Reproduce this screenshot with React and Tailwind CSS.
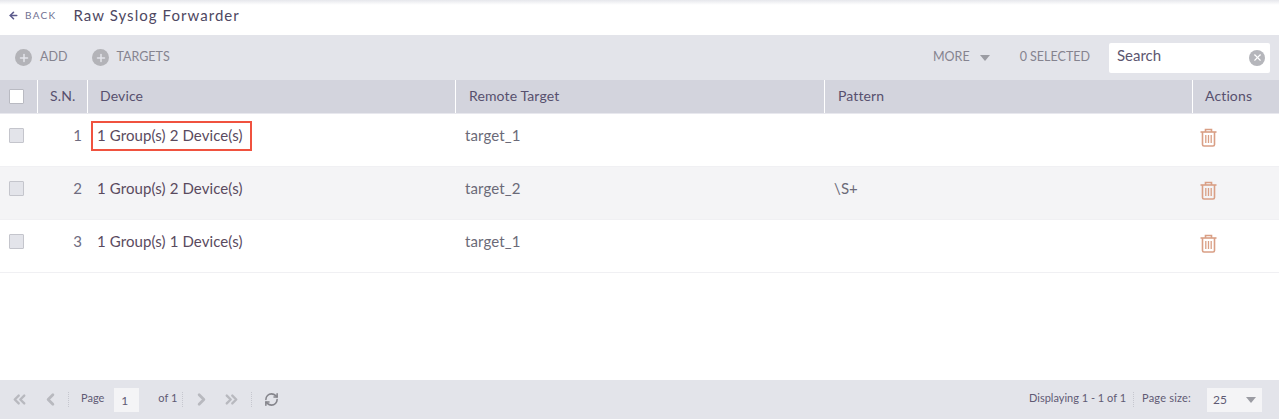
import React from "react";
import { ChevronsLeft, ChevronLeft, ChevronRight, ChevronsRight, RefreshCw, Plus, X, ArrowLeft } from "lucide-react";

const rows = [
  { id: 1, device: "1 Group(s) 2 Device(s)", target: "target_1", pattern: "", highlight: true },
  { id: 2, device: "1 Group(s) 2 Device(s)", target: "target_2", pattern: "\\S+" },
  { id: 3, device: "1 Group(s) 1 Device(s)", target: "target_1", pattern: "" },
];

const Caret = () => <span className="inline-block w-0 h-0 border-x-[5px] border-x-transparent border-t-[6px] border-t-[#9b9ca3]" />;

const PlusCircle = () => (
  <span className="w-[17px] h-[17px] rounded-full bg-[#b3b3b8] flex items-center justify-center">
    <Plus size={12} strokeWidth={3} color="#e3e4ea" />
  </span>
);

const Sep = () => <span className="block w-px h-[15px] border-l border-dotted border-[#c6c7cf]" />;

const TrashIcon = () => (
  <svg width="17" height="19" viewBox="0 0 17 19" fill="none" stroke="#d99f85" strokeWidth="1.6">
    <path d="M0.5 4h16" />
    <path d="M5.5 4V1.5h6V4" />
    <path d="M2.5 4v12.5a1.5 1.5 0 0 0 1.5 1.5h9a1.5 1.5 0 0 0 1.5-1.5V4" />
    <path d="M5.8 7v8M8.5 7v8M11.2 7v8" strokeWidth="1.3" />
  </svg>
);

export default function App() {
  return (
    <div className="w-[1279px] h-[419px] flex flex-col bg-white overflow-hidden font-['Lato',sans-serif] text-[15px] tracking-[0.1px] text-[#57506e]">
      <header className="h-[35px] shrink-0 flex items-center pl-[8px] pb-[4px] bg-gradient-to-b from-[#e6e7ec] via-white via-[14%] to-white">
        <ArrowLeft size={11} strokeWidth={3.5} color="#5b5a8c" />
        <span className="ml-[6px] text-[10px] tracking-[1.3px] text-[#6f7192]">BACK</span>
        <span className="ml-[17px] text-[15px] tracking-[1.05px] text-[#4e4862]">Raw Syslog Forwarder</span>
      </header>

      <div className="h-[45px] shrink-0 flex items-center bg-[#e3e4ea] pl-[15px] pr-[9px] text-[12.5px] tracking-normal text-[#85838f]">
        <PlusCircle />
        <span className="ml-[8px] -mt-[1px]">ADD</span>
        <span className="ml-[25px]"><PlusCircle /></span>
        <span className="ml-[7px] -mt-[1px]">TARGETS</span>
        <span className="ml-auto -mt-[1px]">MORE</span>
        <span className="ml-[10px]"><Caret /></span>
        <span className="ml-[30px] -mt-[1px]">0 SELECTED</span>
        <div className="ml-[19px] w-[161px] h-[30px] bg-white rounded-[2px] flex items-center justify-between pl-[8px] pr-[5px] text-[15px] text-[#5c5670]">
          <span className="-mt-[4px]">Search</span>
          <span className="w-[16px] h-[16px] rounded-full bg-[#b5b6bb] flex items-center justify-center">
            <X size={11} strokeWidth={2.5} color="#ffffff" />
          </span>
        </div>
      </div>

      <div className="h-[34px] shrink-0 grid grid-cols-[37px_50px_368px_369px_368px_1fr] bg-[#d3d4dd] border-b border-[#e8e8ee] text-[14px] tracking-[0.13px] text-[#57506e]">
        <div className="flex items-center pl-[9px]">
          <span className="w-[15px] h-[15px] bg-white border border-[#b9bac2] rounded-[1px]" />
        </div>
        <div className="flex items-center border-l border-white pl-[12px] pb-[2px]">S.N.</div>
        <div className="flex items-center border-l border-white pl-[12px] pb-[2px]">Device</div>
        <div className="flex items-center border-l border-white pl-[13px] pb-[2px]">Remote Target</div>
        <div className="flex items-center border-l border-white pl-[13px] pb-[2px]">Pattern</div>
        <div className="flex items-center border-l border-white pl-[12px] pb-[2px]">Actions</div>
      </div>

      <div className="flex-1">
        {rows.map((row, idx) => (
          <div
            key={row.id}
            className={`h-[53px] grid grid-cols-[37px_50px_368px_369px_368px_1fr] border-b border-[#f0f0f3] ${idx === 1 ? "bg-[#f4f4f6]" : "bg-white"}`}
          >
            <div className="pl-[9px] pt-[14px]">
              <span className="block w-[15px] h-[15px] bg-[#e3e4ea] border border-[#c4c5cc] rounded-[1px]" />
            </div>
            <div className="pt-[10px] pr-[5px] text-right text-[#6f6c80]">{row.id}</div>
            <div className="relative pl-[10px] pt-[10px] text-[#5a4a5e]">
              {row.device}
              {row.highlight && <span className="absolute left-[4px] top-[7px] w-[161px] h-[30px] border-2 border-[#f0523f]" />}
            </div>
            <div className="pl-[10px] pt-[10px] text-[#6b6a78]">{row.target}</div>
            <div className="pl-[10px] pt-[10px] text-[#6b6a78]">{row.pattern}</div>
            <div className="pl-[8px] pt-[14px]">
              <TrashIcon />
            </div>
          </div>
        ))}
      </div>

      <footer className="h-[39px] shrink-0 flex items-center bg-[#e3e4ea] pl-[10px] pr-[17px] text-[11px] tracking-normal text-[#5f5a74]">
        <ChevronsLeft size={19} strokeWidth={3} color="#b8b9bf" />
        <span className="ml-[12px]"><ChevronLeft size={19} strokeWidth={3.5} color="#b8b9bf" /></span>
        <span className="ml-[8px]"><Sep /></span>
        <span className="ml-[12px] -mt-[2px]">Page</span>
        <span className="ml-[10px] w-[25px] h-[24px] bg-[#f4f4f6] pl-[7px] pt-[4px] text-[12px]">1</span>
        <span className="ml-[19px] -mt-[2px]">of 1</span>
        <span className="ml-[5px]"><Sep /></span>
        <span className="ml-[9px]"><ChevronRight size={19} strokeWidth={3.5} color="#b8b9bf" /></span>
        <span className="ml-[11px]"><ChevronsRight size={19} strokeWidth={3} color="#b8b9bf" /></span>
        <span className="ml-[10px]"><Sep /></span>
        <span className="ml-[12px]"><RefreshCw size={15} strokeWidth={2.5} color="#85858c" /></span>
        <span className="ml-auto -mt-[2px]">Displaying 1 - 1 of 1</span>
        <span className="ml-[7px]"><Sep /></span>
        <span className="ml-[8px] -mt-[2px] tracking-[0.2px]">Page size:</span>
        <div className="ml-[16px] w-[55px] h-[24px] bg-[#f4f4f6] flex items-center justify-between pl-[6px] pr-[6px] text-[12px]">
          <span>25</span>
          <Caret />
        </div>
      </footer>
    </div>
  );
}
